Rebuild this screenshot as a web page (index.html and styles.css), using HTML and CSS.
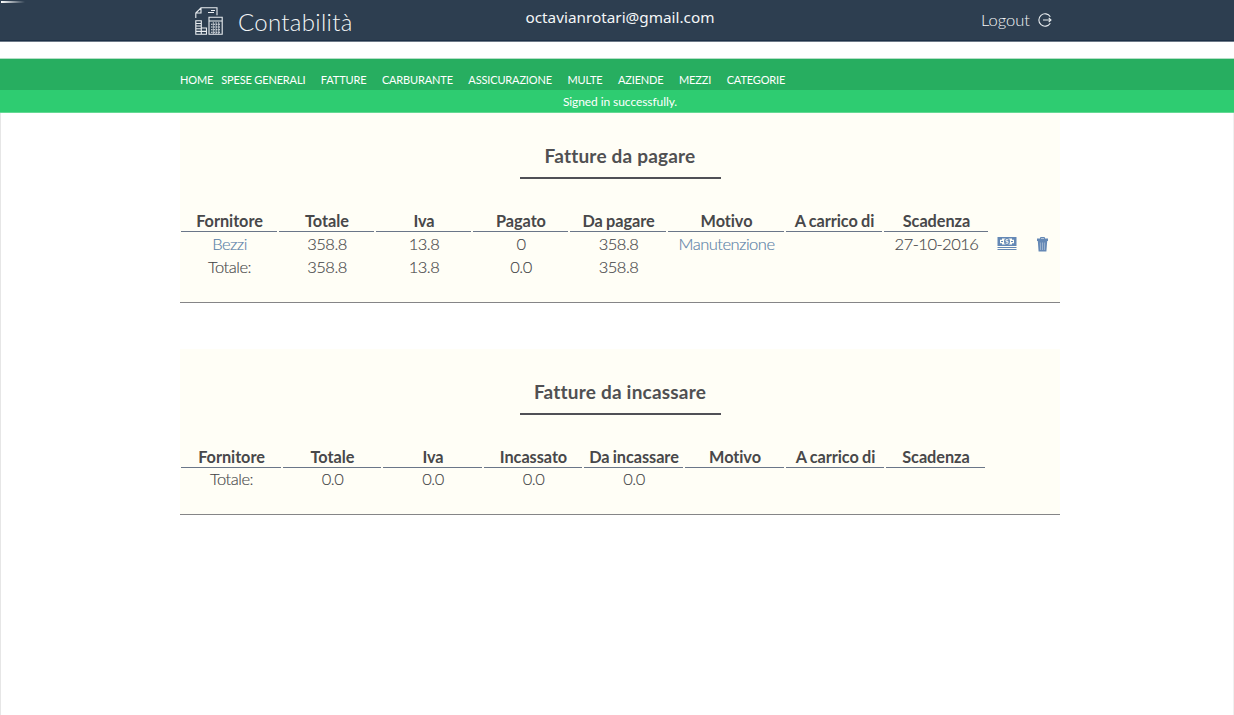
FILE: index.html
```html
<!DOCTYPE html>
<html lang="it">
<head>
<meta charset="utf-8">
<title>Contabilità</title>
<link rel="stylesheet" href="styles.css">
</head>
<body>
<header class="topbar">
  <div class="container topbar-inner">
    <a class="brand">
      <svg class="brand-icon" viewBox="0 0 28 28" fill="none" stroke="#e9edf0" stroke-width="1.1">
        <path d="M.8 11V6L6 .8h16v7.500M.8 6H6V.8M13 5.500h6M16 3.500h4"/>
        <path d="M.8 27.200V13.800h5.500v13.400zM.8 16.500h5.500M.8 19h5.500M.8 21.700h5.500M.8 24.400h10.700M6.300 21h5.200v6.200H.8"/>
        <path d="M14 10.200h13.200v17H14zM14 14h13.200"/>
        <path stroke-dasharray="1.500 1" d="M16 17.200h10M16 20h10M16 22.700h10M16 25.200h10"/>
        <path d="M18.300 15v12M21 15v12M23.700 15v12" stroke-width=".7"/>
      </svg>
      <span class="brand-name">Contabilità</span>
    </a>
    <span class="user">octavianrotari@gmail.com</span>
    <a class="logout"><span>Logout</span>
      <svg class="logout-icon" viewBox="0 0 14 14" fill="none" stroke="#e9edf0" stroke-width="1.100"><path d="M12.300 3.700a6.200 6.200 0 1 0 0 6.600M5 7h8M10.700 4.800L13 7l-2.300 2.200"/></svg>
    </a>
  </div>
  <span class="glint"></span>
</header>
<nav class="nav">
  <div class="container nav-list">
    <a class="nav-home">HOME</a><a>SPESE GENERALI</a><a>FATTURE</a><a>CARBURANTE</a><a>ASSICURAZIONE</a><a>MULTE</a><a>AZIENDE</a><a>MEZZI</a><a>CATEGORIE</a>
  </div>
</nav>
<div class="notice">Signed in successfully.</div>
<main class="content">
  <section class="panel panel-pay">
    <h2>Fatture da pagare</h2>
    <table class="invoices">
      <colgroup><col class="w96"><col class="w95"><col class="w95"><col class="w95"><col class="w96"><col class="w116"><col class="w96"><col class="w104"><col class="w32"><col class="w35"></colgroup>
      <thead><tr><th>Fornitore</th><th>Totale</th><th>Iva</th><th>Pagato</th><th>Da pagare</th><th>Motivo</th><th>A carrico di</th><th>Scadenza</th><td></td><td></td></tr></thead>
      <tbody>
        <tr class="entry"><td><a>Bezzi</a></td><td>358.8</td><td>13.8</td><td>0</td><td>358.8</td><td><a>Manutenzione</a></td><td></td><td>27-10-2016</td>
          <td><svg class="icon-cash" viewBox="0 0 20 13"><path fill="#6488b5" d="M.5 0h19v9H.5zM.5 10h19v1H.5zM.5 12h19v1H.5z"/><path fill="#fffef6" d="M5 1.500h10v1.200h2v3.600h-2v1.200H5V6.300H3V2.700h2z"/><path fill="#6488b5" d="M4 4h2v1H4zM14 4h2v1h-2z"/><ellipse cx="10" cy="4.500" rx="3" ry="3.500" fill="#6488b5"/><path fill="none" stroke="#fffef6" stroke-width=".9" d="M11.300 2.700H9v1.700h2v1.800H8.700"/></svg></td>
          <td><svg class="icon-trash" viewBox="0 0 11 15"><path fill="none" stroke="#6488b5" d="M3.500 2V.5h4V2"/><path fill="#6488b5" d="M0 1.500h11V4H0zM.8 4h9.400l-.8 10.500H1.600z"/><path stroke="#b5c5d8" stroke-width=".7" d="M3.300 5.500l.3 7.500M5.500 5.500V13M7.700 5.500L7.400 13"/></svg></td></tr>
        <tr><td>Totale:</td><td>358.8</td><td>13.8</td><td>0.0</td><td>358.8</td><td></td><td></td><td></td><td></td><td></td></tr>
      </tbody>
    </table>
  </section>
  <section class="panel panel-collect">
    <h2>Fatture da incassare</h2>
    <table class="invoices">
      <colgroup><col class="w100"><col class="w98"><col class="w99"><col class="w98"><col class="w99"><col class="w99"><col class="w98"><col class="w99"><col class="w72"></colgroup>
      <thead><tr><th>Fornitore</th><th>Totale</th><th>Iva</th><th>Incassato</th><th>Da incassare</th><th>Motivo</th><th>A carrico di</th><th>Scadenza</th><td></td></tr></thead>
      <tbody><tr><td>Totale:</td><td>0.0</td><td>0.0</td><td>0.0</td><td>0.0</td><td></td><td></td><td></td><td></td></tr></tbody>
    </table>
  </section>
</main>
</body>
</html>
```
FILE: styles.css
```css
* { box-sizing: border-box; }
body { margin: 0; background: #fff; color: #48484a; font-family: Lato, sans-serif; font-weight: 300; }
.container { width: 880px; margin-left: 180px; }
.content { min-height: 602px; padding: 0 173px 0 179px; border-left: 1px solid #e6e6e6; border-right: 1px solid #f0f0f0; }
.topbar { position: relative; height: 42px; background: #2d3e50; border-bottom: 1px solid #6d7988; color: #f4f6f7; }
.topbar::after { content: ""; position: absolute; left: 0; right: 0; bottom: 0; height: 1px; background: #1d3046; }
.glint { position: absolute; left: 1px; top: 1px; width: 24px; height: 2px; background: linear-gradient(to right, #fff, transparent); }
.topbar-inner { display: grid; grid-template-columns: 1fr auto 1fr; height: 41px; }
.brand { display: flex; padding: 7px 0 0 15px; }
.brand-icon { width: 28px; height: 28px; }
.brand-name { margin: -1px 0 0 15px; font-size: 24px; line-height: 31px; letter-spacing: .3px; white-space: nowrap; }
.user { padding-top: 6px; font: 400 15.300px/22px "Noto Sans", sans-serif; }
.logout { display: flex; justify-content: flex-end; gap: 8px; padding: 10px 8px 0 0; font-size: 16.500px; line-height: 20px; }
.logout-icon { width: 14px; height: 14px; margin-top: 3px; }
.nav { height: 32px; margin-top: 16px; padding-top: 14px; background: #27ae60; border-top: 1px solid #b4dfc6; color: #fff; font-size: 11px; line-height: 14px; font-weight: 400; letter-spacing: -.15px; }
.nav-list { display: flex; gap: 15.500px; white-space: nowrap; }
.nav-home { margin-right: -7.500px; }
.notice { height: 23px; padding-left: 6px; background: #2ecc71; border-bottom: 1px solid #64d994; color: #fff; text-align: center; font-size: 12px; line-height: 23px; font-weight: 400; letter-spacing: -.08px; }
.panel { padding-top: 28px; background: #fffef6; border-bottom: 1px solid #858587; }
.panel-pay { height: 190px; }
.panel-collect { height: 166px; margin-top: 46px; }
.panel h2 { width: 201px; height: 38px; margin: 0 auto 31px; color: #505052; border-bottom: 2px solid #505056; font-size: 19px; line-height: 30px; font-weight: 700; letter-spacing: .2px; text-align: center; white-space: nowrap; }
.invoices { width: 882px; margin-left: -1px; table-layout: fixed; border-spacing: 2px 0; font-size: 16.500px; line-height: 20px; text-align: center; }
.invoices th, .invoices td { padding: 0; height: 22px; white-space: nowrap; }
.invoices th { padding: 1px 0 0 1px; border-bottom: 1px solid #6a7688; font-size: 16.300px; font-weight: 700; letter-spacing: -.05px; word-spacing: -.7px; }
.invoices td { padding-left: 1px; vertical-align: top; letter-spacing: -.5px; -webkit-text-stroke: .15px; }
.invoices tbody td { padding-top: 1px; }
.invoices .entry td { height: 24px; padding-top: 2px; }
.invoices a { color: #5c82a8; }
.invoices svg { display: block; margin: 3px auto 0; }
.icon-cash { width: 20px; height: 13px; }
.icon-trash { width: 11px; height: 15px; }
.w32 { width: 32px; }
.w35 { width: 35px; }
.w72 { width: 72px; }
.w95 { width: 95px; }
.w96 { width: 96px; }
.w98 { width: 98px; }
.w99 { width: 99px; }
.w100 { width: 100px; }
.w104 { width: 104px; }
.w116 { width: 116px; }
```
